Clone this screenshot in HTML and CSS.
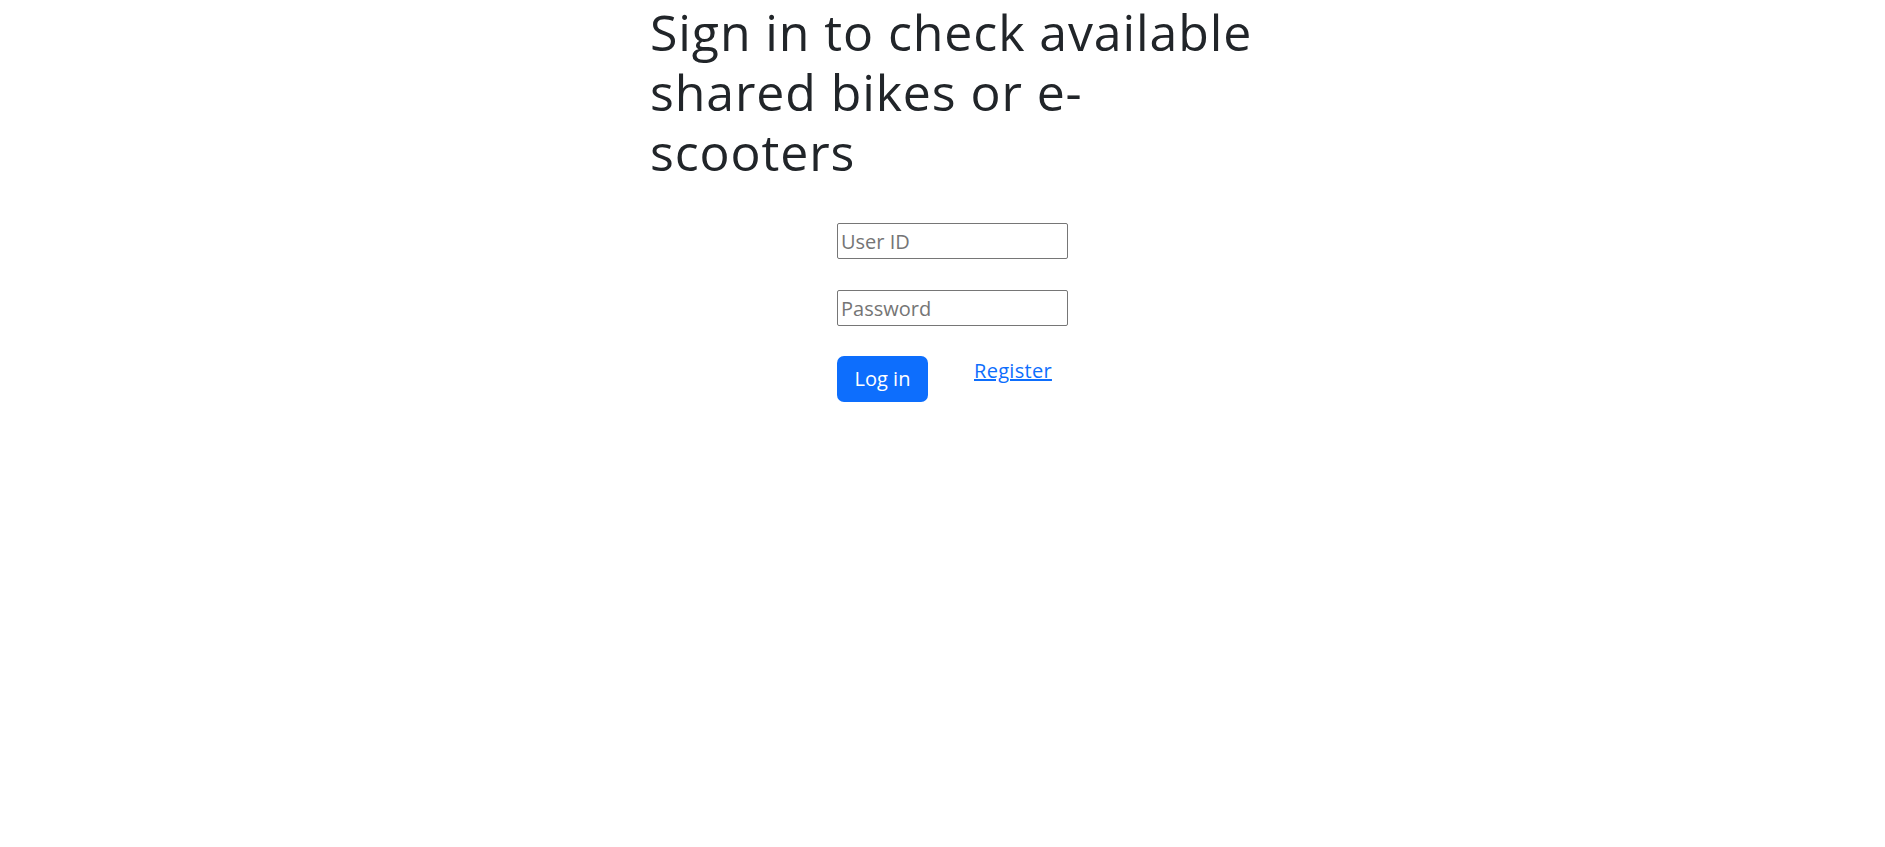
FILE: index.html
```html
<!DOCTYPE html>
<html lang="en">
<head>
<meta charset="utf-8">
<title>Sign in</title>
<link rel="stylesheet" href="styles.css">
</head>
<body>
<main class="page">
  <h1 class="title">Sign in to check available shared bikes or e-scooters</h1>
  <form class="login">
    <input class="field" type="text" placeholder="User ID">
    <input class="field" type="password" placeholder="Password">
    <div class="actions">
      <button class="btn" type="button">Log in</button>
      <a class="link" href="#">Register</a>
    </div>
  </form>
</main>
</body>
</html>
```
FILE: styles.css
```css
html, body {
  margin: 0;
  padding: 0;
  background: #fff;
}
body {
  font-family: "Open Sans", "Noto Sans", sans-serif;
  color: #212529;
  font-size: 20px;
  line-height: 1.5;
}
.page {
  width: 612px;
  margin: 0 auto 0 650px;
}
.title {
  margin: 0 0 10px;
  padding-top: 2px;
  font-size: 50px;
  font-weight: 400;
  line-height: 60px;
  letter-spacing: 0.9px;
}
.login {
  display: flex;
  flex-direction: column;
  align-items: flex-start;
  padding-left: 187px;
  padding-top: 31px;
}
.field {
  box-sizing: border-box;
  width: 231px;
  height: 36px;
  margin: 0 0 31px;
  padding: 0 3px;
  border: 1px solid #767676;
  border-radius: 2px;
  font-family: inherit;
  font-size: 20px;
  color: #212529;
}
.field:nth-of-type(2) {
  margin-bottom: 30px;
}
.field::placeholder {
  color: #757575;
}
.actions {
  display: flex;
  align-items: flex-start;
  gap: 46px;
}
.btn {
  box-sizing: border-box;
  width: 91px;
  height: 46px;
  border: 0;
  border-radius: 7px;
  background: #0d6efd;
  color: #fff;
  font-family: inherit;
  font-size: 20px;
  padding: 0 0 2px;
}
.link {
  color: #0d6efd;
  text-decoration: underline;
  font-size: 20px;
  line-height: 30px;
  margin-top: 0;
  letter-spacing: 0.3px;
}
```
